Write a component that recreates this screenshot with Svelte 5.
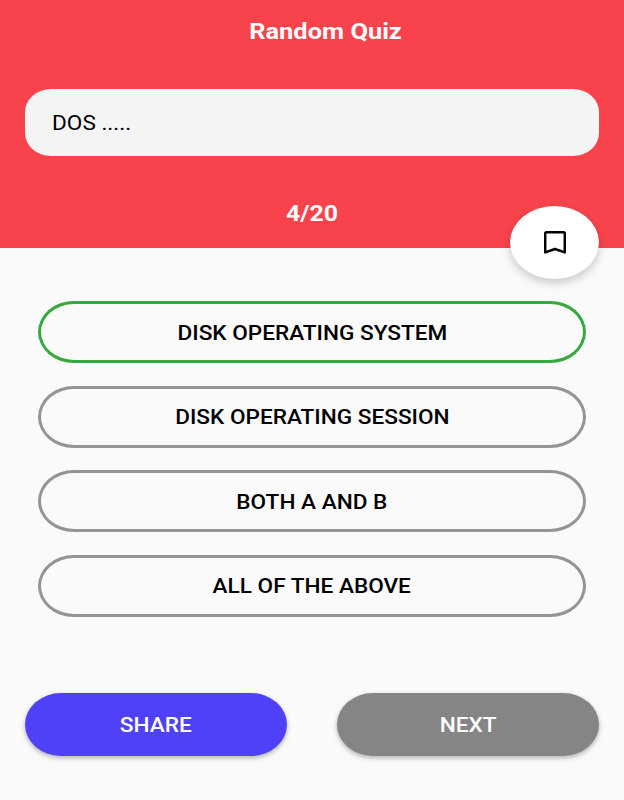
<script>
	const options = [
		{ label: 'DISK OPERATING SYSTEM', correct: true },
		{ label: 'DISK OPERATING SESSION', correct: false },
		{ label: 'BOTH A AND B', correct: false },
		{ label: 'ALL OF THE ABOVE', correct: false }
	];
</script>

<div class="screen">
	<header class="top">
		<h1><span class="wide">Random Quiz</span></h1>
		<div class="question"><span class="wide left">DOS .....</span></div>
		<div class="count"><span class="wide">4/20</span></div>
		<button class="fab" aria-label="Bookmark">
			<svg width="22" height="23" viewBox="0 0 22 23" fill="none" stroke="#000" stroke-width="2.5">
				<path d="M2.4 1.3h17.2a1.2 1.2 0 0 1 1.2 1.2V21.4L11 18 1.2 21.4V2.5a1.2 1.2 0 0 1 1.2-1.2z" stroke-linejoin="round" />
			</svg>
		</button>
	</header>

	<div class="options">
		{#each options as opt}
			<button class="option" class:correct={opt.correct}><span class="wide">{opt.label}</span></button>
		{/each}
	</div>

	<div class="actions">
		<button class="btn share"><span class="wide">SHARE</span></button>
		<button class="btn next"><span class="wide">NEXT</span></button>
	</div>
</div>

<style>
	:global(body) {
		margin: 0;
		background: #fafafa;
	}

	.screen {
		width: 624px;
		height: 800px;
		display: flex;
		flex-direction: column;
		background: #fafafa;
		font-family: Roboto, 'Liberation Sans', sans-serif;
		overflow: hidden;
	}

	/* the reference is a stretched phone capture, text runs about 13% wide */
	.wide {
		display: inline-block;
		transform: scaleX(1.13);
	}

	.wide.left {
		transform-origin: left center;
	}

	.top {
		position: relative;
		height: 248px;
		box-sizing: border-box;
		padding: 18px 25px 0;
		background: #f8434c;
		display: flex;
		flex-direction: column;
		flex-shrink: 0;
	}

	h1 {
		margin: 0;
		height: 26px;
		padding-left: 27px;
		line-height: 27px;
		text-align: center;
		font-size: 22.5px;
		font-weight: 700;
		color: #fff;
	}

	.question {
		margin-top: 45px;
		height: 67px;
		box-sizing: border-box;
		padding-left: 27px;
		display: flex;
		align-items: center;
		background: #f4f4f4;
		border-radius: 26px / 23px;
		font-size: 20px;
		color: #000;
	}

	.count {
		margin-top: 45px;
		line-height: 26px;
		text-align: center;
		font-size: 22px;
		font-weight: 700;
		color: #fff;
	}

	.fab {
		position: absolute;
		left: 510px;
		top: 206px;
		width: 89px;
		height: 73px;
		padding: 0;
		border: none;
		border-radius: 50%;
		background: #fff;
		display: flex;
		align-items: center;
		justify-content: center;
		box-shadow: 0 4px 10px rgba(0, 0, 0, 0.2);
	}

	.options {
		margin-top: 53px;
		padding: 0 38px;
		display: flex;
		flex-direction: column;
		gap: 22.5px;
	}

	.option {
		height: 62px;
		box-sizing: border-box;
		border: 3px solid #949494;
		border-radius: 36px / 31px;
		background: transparent;
		font-family: inherit;
		font-size: 20px;
		font-weight: 500;
		color: #000;
		padding: 1px 0 0;
	}

	.option.correct {
		border-color: #35a93f;
	}

	.actions {
		margin-top: 76.5px;
		padding: 0 25px;
		display: flex;
		justify-content: space-between;
	}

	.btn {
		width: 262px;
		height: 63px;
		border: none;
		border-radius: 36px / 31.5px;
		font-family: inherit;
		font-size: 20px;
		font-weight: 500;
		color: #fff;
		padding: 0;
		box-shadow: 0 2px 5px rgba(0, 0, 0, 0.3);
	}

	.share {
		background: #4f41f8;
	}

	.next {
		background: #858585;
	}
</style>
